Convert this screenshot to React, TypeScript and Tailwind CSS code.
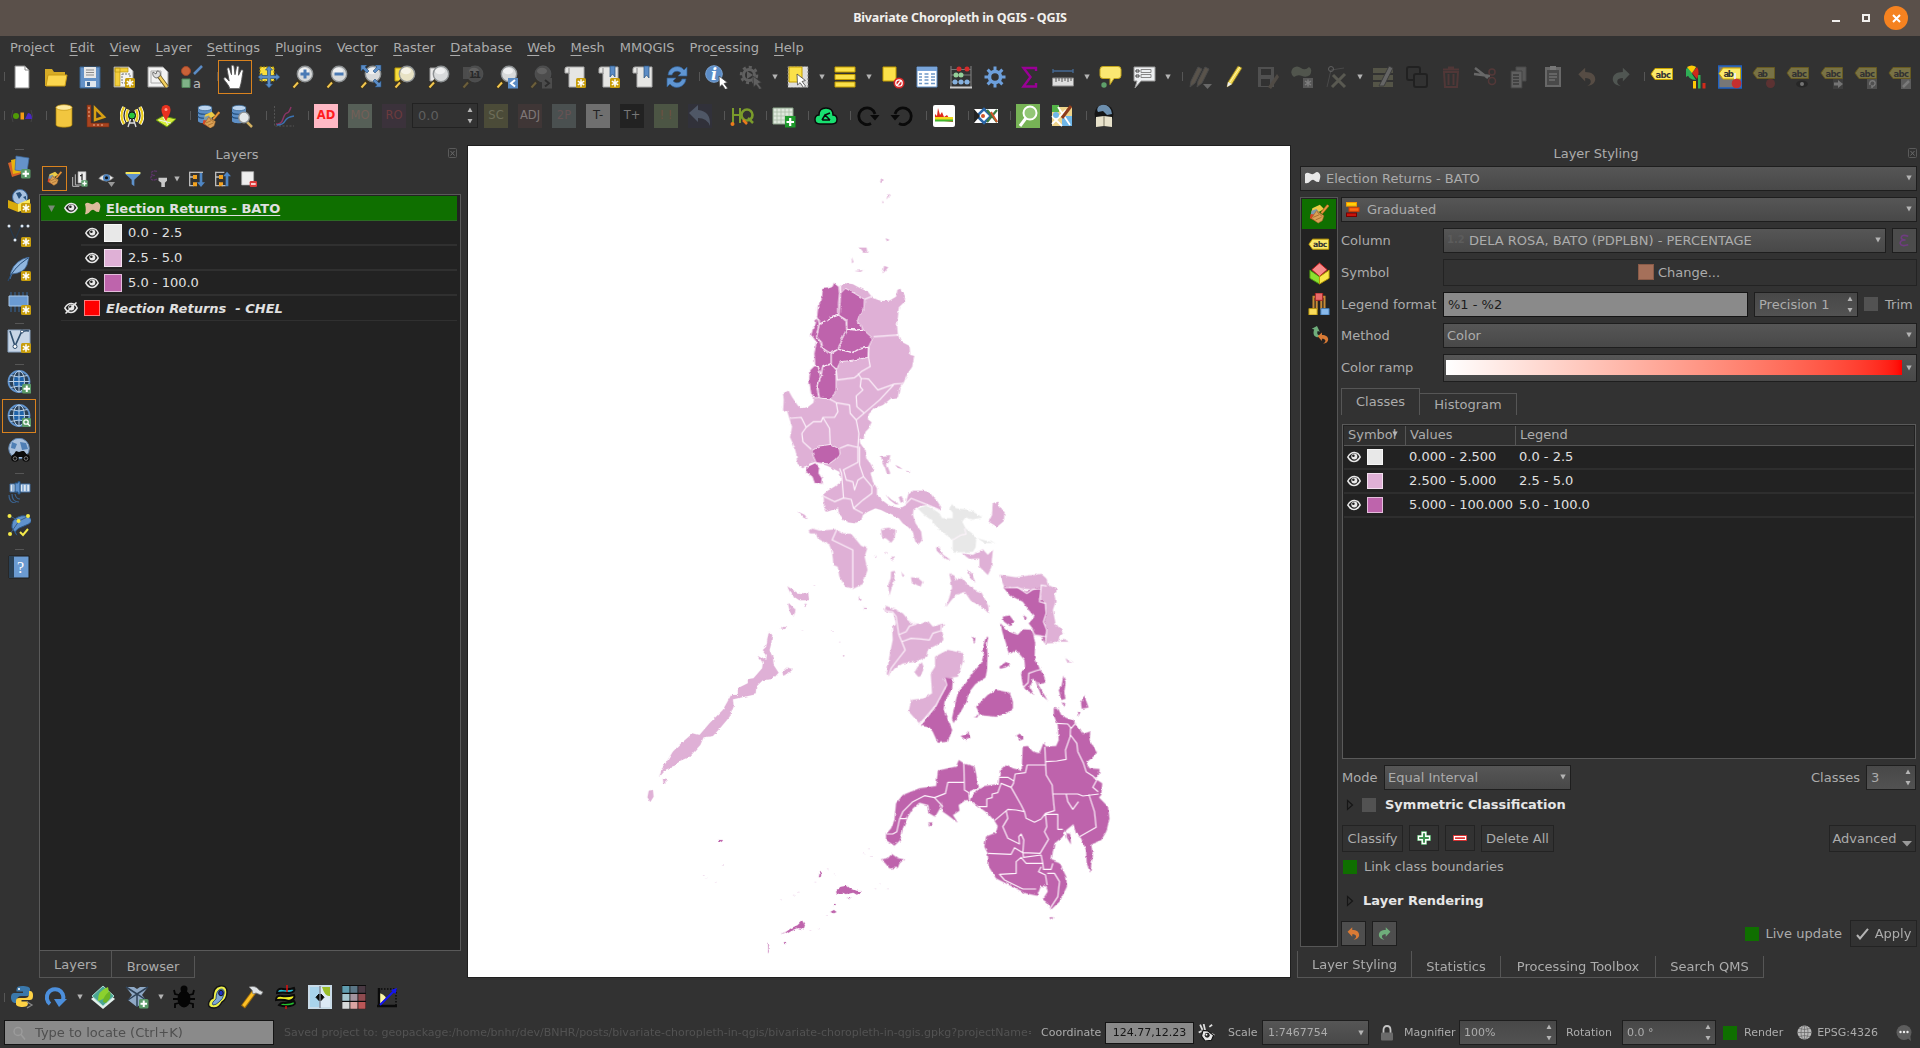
import React from 'react';

type Kids = { children?: React.ReactNode };

/* ---------- icon primitives ---------- */

function Ico({ children, s = 24, o = 1 }: Kids & { s?: number; o?: number }) {
  return (
    <svg width={s} height={s} viewBox="0 0 24 24" opacity={o} fill="none" className="shrink-0">
      {children}
    </svg>
  );
}

const Star = ({ x = 14, y = 14 }: { x?: number; y?: number }) => (
  <g transform={`translate(${x} ${y})`}>
    <rect width="10" height="10" rx="1.5" fill="#c79d0c" />
    <path d="M5 1.3v7.4M1.8 3.2l6.4 3.6M8.2 3.2L1.8 6.8" stroke="#fff" strokeWidth="1.5" />
  </g>
);

const PlusBadge = ({ x = 14, y = 14 }: { x?: number; y?: number }) => (
  <g transform={`translate(${x} ${y})`}>
    <rect width="9.5" height="9.5" rx="1.5" fill="#5a9a68" />
    <path d="M4.75 1.5v6.5M1.5 4.75h6.5" stroke="#fff" strokeWidth="2" />
  </g>
);

const Lens = ({ children, fill = '#d8dadb' }: Kids & { fill?: string }) => (
  <>
    <path d="M9.500 14.500L2 23" stroke="#3b321e" strokeWidth="4" />
    <path d="M7 17.500L2.500 22.500" stroke="#f3c74d" strokeWidth="2" />
    <circle cx="14" cy="9" r="7.700" fill={fill} stroke="#8d9193" strokeWidth="1.400" />
    <ellipse cx="13" cy="6" rx="5" ry="3.200" fill="#fff" opacity=".6" />
    {children}
  </>
);

const Scroll = ({ children }: Kids) => (
  <>
    <path d="M4 2h17v20H6V8H2V4q0-2 2-2z" fill="#e6e6e4" stroke="#aaa" />
    <path d="M6 3v6" stroke="#8a8a8a" />
    {children}
  </>
);

const Cursor = ({ x = 12, y = 11, fill = '#fff' }: { x?: number; y?: number; fill?: string }) => (
  <path transform={`translate(${x} ${y})`} d="M0 0l.5 11 2.600-2.300 3.500 5 2-1.500-3.500-4.700 3.300-1z" fill={fill} stroke="#444" strokeWidth=".8" />
);

const Tag = ({ y = 0, t = 'abc' }: { y?: number; t?: string }) => (
  <g transform={`translate(0 ${y})`}>
    <path d="M1 8l4-5.500h17.500v11H5z" fill="#fbe96a" stroke="#c9a400" />
    <text x="5.500" y="11.500" fontSize="8.500" fontWeight="bold" fill="#333" fontFamily="DejaVu Sans" textLength={t.length * 5.2}>{t}</text>
  </g>
);

const Globe = ({ children }: Kids) => (
  <>
    <circle cx="12" cy="11.500" r="10.500" fill="#2a3f55" stroke="#5f92cc" strokeWidth="1.800" />
    <circle cx="12" cy="11.500" r="6" fill="#1f62a8" />
    <path d="M1.500 11.500h21M12 1v21M3.500 5.500q8.500 3 17 0M3.500 17.500q8.500-3 17 0" stroke="#b9cfe6" strokeWidth="1" />
    <ellipse cx="12" cy="11.500" rx="5.500" ry="10.500" stroke="#b9cfe6" strokeWidth="1" />
    {children}
  </>
);

const Brush = () => (
  <>
    <path d="M4 5l9-4 5 5-9 5-6-1z" fill="#eccb46" />
    <path d="M3 8l6-2 4 5-6 4-5-2z" fill="#7f9aa8" />
    <path d="M2 12l6 1 2 9-9-5z" fill="#dd4326" />
    <path d="M9 8l9 6-2 6-5 3-8-6z" fill="#dba055" stroke="#8f5a1e" strokeWidth=".6" />
    <path d="M5 16l7-3M8 19l7-3M10 10l6 5" stroke="#9a6224" strokeWidth=".9" />
    <path d="M15 11L23 1.500" stroke="#a3611c" strokeWidth="3.400" />
    <path d="M15 11L23 1.500" stroke="#ea9a40" strokeWidth="2" />
  </>
);

const Db = () => (
  <>
    <path d="M2 4v13c0 3 14 3 14 0V4z" fill="#5d8fc6" />
    <ellipse cx="9" cy="4" rx="7" ry="2.700" fill="#bcd4ee" stroke="#31628f" strokeWidth=".7" />
    <path d="M2 8c0 3 14 3 14 0M2 12c0 3 14 3 14 0" stroke="#24507d" strokeWidth="1.200" />
  </>
);

const EyeIcon = ({ off = false }: { off?: boolean }) => (
  <svg width="14" height="12" viewBox="0 0 14 12" fill="none" className="shrink-0">
    <path d="M.8 6Q3.500 1.300 7.500 1.500T13.200 6Q10.500 10.500 7 10.500T.8 6z" fill={off ? 'none' : '#222'} stroke="#e8e8e8" strokeWidth="1.500" />
    <circle cx="7.300" cy="5.500" r="3" fill="#e8e8e8" />
    <circle cx="6.400" cy="4.800" r="1.300" fill="#222" />
    {off && <path d="M1.500 11.500L12.500.5" stroke="#e8e8e8" strokeWidth="1.500" />}
  </svg>
);

const Undo = ({ c = '#d97a35', flip = false }: { c?: string; flip?: boolean }) => (
  <g transform={flip ? 'translate(24 0) scale(-1 1)' : undefined}>
    <path d="M2.500 9L10 2v4.500c7 0 11 3 11 8 0 4-4 7-9 7.500 3.500-2 4.500-4 4-6s-2.500-3-6-3v4z" fill={c} />
  </g>
);

const Caret = ({ className = 'w-[13px]' }: { className?: string }) => (
  <span className={`${className} flex justify-center shrink-0`}>
    <svg width="6" height="6" viewBox="0 0 6 6"><path d="M.3.5h5.400L3 5.500z" fill="#b4b4b4" /></svg>
  </span>
);

const Btn = ({ children, on = false }: Kids & { on?: boolean }) => (
  <span className={`w-[34px] h-[34px] shrink-0 flex items-center justify-center border ${on ? 'border-[#d9821e]' : 'border-transparent'}`}>{children}</span>
);

const Sep = ({ w = 'w-2' }: { w?: string }) => (
  <span className={`${w} h-[9px] shrink-0 border-r border-[#565656]`} />
);
const HSep = ({ h = 'h-[7px]' }: { h?: string }) => (
  <span className={`${h} w-[9px] shrink-0 border-b border-[#565656]`} />
);

const Mini = ({ bg, fg, t }: { bg: string; fg: string; t: string }) => (
  <span className={`w-6 h-6 flex items-center justify-center text-[11.500px] leading-none ${bg} ${fg}`}>{t}</span>
);

/* ---------- toolbars ---------- */

function MainToolbar() {
  return (
    <div className="flex h-[39px] items-center">
      <Sep w="w-[5px]" />
      <Btn><Ico><path d="M5 1h10l4 4v18H5z" fill="#fff" stroke="#888" /><path d="M15 1v4h4" stroke="#888" /></Ico></Btn>
      <Btn><Ico><path d="M1 4h7l2 3h11v14H1z" fill="#d6ab26" /><path d="M4 10h19l-2 11H2z" fill="#fbd64f" stroke="#c99a15" /></Ico></Btn>
      <Btn><Ico><path d="M2 2h20v21H2z" fill="#6391c7" stroke="#39628f" /><path d="M6 2h12v11H6z" fill="#e8e8e8" /><path d="M8 5h8M8 7.500h8M8 10h8" stroke="#8a8a8a" /><path d="M7 16h11v6H7z" fill="#dfe6ee" /><path d="M9 17h3v4H9z" fill="#365e8b" /></Ico></Btn>
      <Btn><Ico><path d="M2 2h15l4 4v16H2z" fill="#f3f3f3" stroke="#999" /><path d="M3 3h5v18H3zM3 3h13v4H3z" fill="#f4cf3c" stroke="#b8950f" strokeWidth=".7" /><path d="M10 9h8v9h-8z" stroke="#777" strokeDasharray="2 1" /><Star x={13} y={13} /></Ico></Btn>
      <Btn><Ico><path d="M2 2h15l5 5v15H2z" fill="#f3f3f3" stroke="#999" /><path d="M5 6h10v12H5z" stroke="#aaa" /><path d="M12 10l9 12" stroke="#66531d" strokeWidth="4" /><path d="M13 11l8 11" stroke="#f3cf5e" strokeWidth="2.400" /><path d="M7 7l3 2 1-3c3 0 4 2 3 5l-3 2c-3 0-5-3-4-6z" fill="#ddd" stroke="#555" strokeWidth=".8" /></Ico></Btn>
      <Btn><Ico><circle cx="6" cy="6" r="4.500" fill="#c96238" stroke="#a3482a" /><path d="M14 9l8-8" stroke="#5b8cc6" strokeWidth="2.500" /><path d="M2 14h8v8.500H2z" fill="#7fb287" stroke="#52875b" /><text x="13" y="22.500" fontSize="13" fill="#bbb" fontFamily="DejaVu Sans">a</text></Ico></Btn>
      <Sep w="w-[9px]" />
      <Btn on><Ico s={28}><path d="M7.500 22c-.5-3-4-6-5-8-.6-1.500 1.300-2 2.300-.8L7 15.500 5.200 5.500c-.2-1.600 1.800-2 2.200-.4L9 10 8.800 3.200c0-1.700 2.200-1.700 2.400 0L12 10l1.300-6.500c.4-1.500 2.300-1.200 2.100.4L15 10.500l2-4c.7-1.300 2.300-.6 1.900.8-.9 4-1 9-3 14.700z" fill="#fff" stroke="#555" strokeWidth=".8" /></Ico></Btn>
      <Btn><Ico><path d="M3 2h14v14H3z" fill="#f9dd3e" stroke="#a88b00" strokeDasharray="2 1" /><path d="M12 1l3.500 4h-2v5.500H19v-2l4 3.500-4 3.500v-2h-5.500V19h2L12 23l-3.500-4h2v-5.500H5v2L1 12l4-3.500v2h5.500V5h-2z" fill="#5b8cc6" stroke="#29527d" strokeWidth=".7" /></Ico></Btn>
      <Btn><Ico><Lens><path d="M14 4.500v9M9.500 9h9" stroke="#4a7ab5" strokeWidth="3" /></Lens></Ico></Btn>
      <Btn><Ico><Lens><path d="M9.500 9h9" stroke="#4a7ab5" strokeWidth="3" /></Lens></Ico></Btn>
      <Btn><Ico><Lens /><path d="M2 0h6L6 2l4 4-2 2-4-4-2 2zM22 0h-6l2 2-4 4 2 2 4-4 2 2zM22 22h-6l2-2-4-4 2-2 4 4 2-2z" fill="#5b8cc6" stroke="#29527d" strokeWidth=".6" /></Ico></Btn>
      <Btn><Ico><path d="M2 3h10v13H2z" fill="#f7dc3c" stroke="#b99a05" /><Lens fill="#e8e2c4" /></Ico></Btn>
      <Btn><Ico><path d="M3 3h10v13H3z" fill="#e9e9e9" stroke="#999" /><Lens /></Ico></Btn>
      <Btn><Ico o={0.3}><path d="M2 2h10v12H2z" fill="#888" /><Lens fill="#888"><text x="8" y="12.500" fontSize="9" fontWeight="bold" fill="#111" textLength="12">1:1</text></Lens></Ico></Btn>
      <Btn><Ico><Lens /><path d="M13 13h10v10.500H13z" fill="#5b8cc6" /><path d="M20 15l-4 3.300 4 3.300" stroke="#fff" strokeWidth="2" /></Ico></Btn>
      <Btn><Ico o={0.3}><Lens fill="#888" /><path d="M13 13h10v10.500H13z" fill="#888" /><path d="M16 15l4 3.300-4 3.300" stroke="#222" strokeWidth="2" /></Ico></Btn>
      <Btn><Ico><Scroll /><Star x={13} y={13} /></Ico></Btn>
      <Btn><Ico><Scroll><path d="M13 1h5v11l-2.500-3-2.500 3z" fill="#5b8cc6" stroke="#29527d" strokeWidth=".7" /></Scroll><Star x={13} y={13} /></Ico></Btn>
      <Btn><Ico><Scroll><path d="M13 1h5v12l-2.500-3-2.500 3z" fill="#5b8cc6" stroke="#29527d" strokeWidth=".7" /></Scroll></Ico></Btn>
      <Btn><Ico><path d="M3 10c1-9 12-11 16-5l3-3v9h-9l3-3c-3-3-8-2-9 2zM21 14c-1 9-12 11-16 5l-3 3v-9h9l-3 3c3 3 8 2 9-2z" fill="#5f95d2" stroke="#315f93" strokeWidth=".7" /></Ico></Btn>
      <Sep w="w-[6px]" />
      <Btn><Ico><circle cx="9" cy="9" r="8.300" fill="#5b8cc6" stroke="#7ba4d4" /><text x="6" y="15" fontSize="16" fontStyle="italic" fontWeight="bold" fill="#fff" fontFamily="DejaVu Serif">i</text><Cursor x={14} /></Ico></Btn>
      <Btn><Ico o={0.45}><circle cx="10" cy="10" r="5.500" stroke="#999" strokeWidth="3" /><circle cx="10" cy="10" r="8" stroke="#999" strokeWidth="2.500" strokeDasharray="3.100 3.100" /><path d="M8 6l6 4-6 4z" fill="#999" /><Cursor x={14} y={11} fill="#999" /></Ico></Btn>
      <Caret />
      <Btn><Ico><path d="M2 1.500h20v21H2z" fill="#ddd" stroke="#777" strokeDasharray="2 1.500" /><path d="M3 2h13v15H3z" fill="#fbe14a" stroke="#c39d00" /><Cursor x={11} y={9} /></Ico></Btn>
      <Caret />
      <Btn><Ico><path d="M2 2h20v5H2zM2 9.500h20v5H2zM2 17h20v5H2z" fill="#fbe14a" stroke="#c39d00" /></Ico></Btn>
      <Caret className="w-[14px]" />
      <Btn><Ico><path d="M2 2h13v14H2z" fill="#fbe14a" stroke="#c39d00" /><circle cx="18" cy="18" r="5.500" fill="#d92828" /><circle cx="18" cy="18" r="3.200" stroke="#fff" strokeWidth="1.300" /><path d="M20 15.500l-4 5" stroke="#fff" strokeWidth="1.300" /></Ico></Btn>
      <Btn><Ico><path d="M2 2h20v20H2z" fill="#fff" stroke="#5b8cc6" /><path d="M2 2h20v4H2z" fill="#79a5da" /><path d="M4 9h3M9.500 9h4M16 9h4M4 12h3M9.500 12h4M16 12h4M4 15h3M9.500 15h4M16 15h4M4 18.500h3M9.500 18.500h4M16 18.500h4" stroke="#6e97c6" strokeWidth="1.500" /></Ico></Btn>
      <Btn><Ico><path d="M2 1v21M22 1v21M2 4.500h20M2 10h20M2 17h20" stroke="#777" strokeWidth="1.200" /><path d="M1 22.500h22" stroke="#ccc" strokeWidth="2" /><g><circle cx="10" cy="4" r="2.500" fill="#d52b2b" /><circle cx="18" cy="4" r="2.500" fill="#d52b2b" /><circle cx="7" cy="10" r="2.500" fill="#95cf9a" /><circle cx="12" cy="10" r="2.500" fill="#95cf9a" /><circle cx="6" cy="17" r="2.500" fill="#86b1df" /><circle cx="12" cy="17" r="2.500" fill="#86b1df" /><circle cx="18" cy="17" r="2.500" fill="#86b1df" /></g></Ico></Btn>
      <Btn><Ico><circle cx="12" cy="12" r="5.500" stroke="#6d9fdb" strokeWidth="3.500" /><path d="M12 1.500v5M12 17.500v5M1.500 12h5M17.500 12h5M4.600 4.600l3.500 3.500M15.900 15.900l3.500 3.500M19.400 4.600l-3.500 3.500M8.100 15.900l-3.500 3.500" stroke="#6d9fdb" strokeWidth="3" /></Ico></Btn>
      <Btn><Ico><path d="M19 6V3H6.500l7 9-7 9.500H19v-3.500" stroke="#9a0096" strokeWidth="2.400" /></Ico></Btn>
      <Btn><Ico><path d="M2 6h20M2 4v4M22 4v4" stroke="#466a94" strokeWidth="1.300" /><path d="M1.500 13h21v8h-21z" fill="#ddd" stroke="#888" /><path d="M5 13v4M8 13v3M11 13v4M14 13v3M17 13v4M20 13v3" stroke="#555" /></Ico></Btn>
      <Caret />
      <Btn><Ico><path d="M5 1.500h15q3 0 3 3v6q0 3-3 3h-4l-4 6v-6H5q-3 0-3-3v-6q0-3 3-3z" fill="#fbe872" stroke="#c3a51c" /><circle cx="6" cy="20" r="2.700" fill="#5ea06a" /></Ico></Btn>
      <Btn><Ico><path d="M2 2h21v14H9l-6 7 2-7H2z" fill="#eef0f2" stroke="#999" /><path d="M4 5h3v2H4zM4 10h3v2H4z" stroke="#444" /><path d="M9 4.500h10v3H9zM9 9.500h10v3H9z" stroke="#888" /></Ico></Btn>
      <Caret />
      <Sep w="w-[9px]" />
      <Btn><Ico o={0.45}><path d="M2 22l1-6L10 2l4 2-7 14zM9 22l1-6L17 2l4 2-7 14z" fill="#8a7b6a" stroke="#666" /><path d="M15 19h9l-4.500 5z" fill="#aaa" /></Ico></Btn>
      <Btn><Ico><path d="M5 22l1-5L16 1l4 2-10 16z" fill="#f3d94e" stroke="#7d6c1e" strokeWidth=".8" /><path d="M8 17L18 2" stroke="#fff6b0" /><path d="M5 22l1-5 4 2z" fill="#eee" /></Ico></Btn>
      <Btn><Ico o={0.35}><path d="M2 2h16v20H2z" fill="#888" /><path d="M5 4h10v6H5zM5 14h9v7H5z" fill="#333" /><path d="M12 22l9-13 2 3-8 12z" fill="#8a7b6a" /></Ico></Btn>
      <Btn><Ico o={0.45}><path d="M3 3q4-3 8 0t8-1q4 2 1 8-4 3-8 1t-8 1q-5-4-1-9z" fill="#77806f" /><path d="M13 13h10v10H13z" fill="#888" /><path d="M18 14.500v7M15 16l6 4M21 16l-6 4" stroke="#ddd" strokeWidth="1.300" /></Ico></Btn>
      <Btn><Ico o={0.45}><path d="M3 22L7 5l13-2" stroke="#666" /><circle cx="7" cy="4" r="2.500" stroke="#999" /><path d="M9 10l12 12M21 9L8 22" stroke="#8a8a78" strokeWidth="3" /></Ico></Btn>
      <Caret />
      <Btn><Ico o={0.5}><path d="M2 3h20v5H2zM2 10h20v5H2zM2 17h20v5H2z" fill="#77775c" /><path d="M8 21L18 1l4 2-9 18z" fill="#999" stroke="#444" /></Ico></Btn>
      <Btn><Ico o={0.8}><rect x="2" y="2" width="13" height="13" rx="2" stroke="#1e1e1e" strokeWidth="2" /><rect x="9" y="9" width="13" height="13" rx="2" fill="#323232" stroke="#1e1e1e" strokeWidth="2" /></Ico></Btn>
      <Btn><Ico o={0.4}><path d="M5 7h14l-1 15H6z" stroke="#7d4040" strokeWidth="2" /><path d="M4 4.500h16M9 2.500h6M9.500 9v11M14.500 9v11" stroke="#7d4040" strokeWidth="2" /></Ico></Btn>
      <Btn><Ico o={0.45}><path d="M2 3l13 10M1 9l16 2" stroke="#aaa" strokeWidth="2.500" /><circle cx="19" cy="7" r="3" stroke="#7d4040" strokeWidth="1.500" /><circle cx="19" cy="16" r="3.500" stroke="#7d4040" strokeWidth="1.500" /></Ico></Btn>
      <Btn><Ico o={0.45}><path d="M9 2h10v14H9z" fill="#888" stroke="#666" /><path d="M4 6h11v17H4z" fill="#999" stroke="#555" /><path d="M6 10h6M6 13h6M6 16h6M6 19h6" stroke="#444" strokeWidth="1.400" /></Ico></Btn>
      <Btn><Ico o={0.45}><path d="M4 2h16v20H4z" fill="#aaa" /><path d="M6 5h12v15H6z" fill="#666" /><path d="M9 1h6v4H9z" fill="#ccc" /><path d="M8 9h8M8 12h8M8 15h6" stroke="#bbb" strokeWidth="1.400" /></Ico></Btn>
      <Btn><Ico s={22} o={0.5}><Undo c="#7a6656" /></Ico></Btn>
      <Btn><Ico s={22} o={0.5}><Undo c="#6f7a72" flip /></Ico></Btn>
      <Sep w="w-[7px]" />
      <Btn><Ico><Tag y={1} /></Ico></Btn>
      <Btn><Ico><path d="M2 4q5-5 10-2L9 8 2 12z" fill="#2fae56" /><path d="M3 2q5-3 9 0l-4 6z" fill="#ffc905" /><path d="M8 8l5-6q3 5 0 12z" fill="#d12a1a" /><path d="M2 6l6 3 4 6q-8 0-10-9z" fill="#2fae56" /><path d="M9 16h3v7.500H9z" fill="#ffc905" /><path d="M14 10h2.500v13.500H14z" fill="#2fae56" /><path d="M18.500 18h3v5.500h-3z" fill="#d12a1a" /></Ico></Btn>
      <Btn><Ico><path d="M.5 1h23v22H.5z" fill="#777" stroke="#1f62c4" strokeWidth="1.600" /><Tag y={.5} t="ab" /><path d="M17 8v8" stroke="#eee" strokeWidth="2" /><circle cx="18.500" cy="18.500" r="4.800" fill="#c42f2f" /></Ico></Btn>
      <Btn><Ico o={0.35}><Tag t="ab" /><circle cx="18.500" cy="18.500" r="4.500" fill="#a33" /></Ico></Btn>
      <Btn><Ico o={0.35}><Tag /><ellipse cx="16" cy="19" rx="6" ry="3.500" fill="#111" /><circle cx="16" cy="19" r="2" fill="#eee" /></Ico></Btn>
      <Btn><Ico o={0.35}><Tag /><path d="M13 14h10v10H13z" fill="#555" /><path d="M14 17.500h4V15l5 4-5 4v-2.500h-4z" fill="#eee" /></Ico></Btn>
      <Btn><Ico o={0.35}><Tag /><path d="M13 14h10v10H13z" fill="#888" /><path d="M16 20c-2-5 6-6 5-1-1 3-3 2-3 2v2" stroke="#fff" strokeWidth="1.500" /></Ico></Btn>
      <Btn><Ico o={0.35}><Tag /><path d="M13 14h10v10H13z" fill="#aaa" /><path d="M15 22l6-6" stroke="#fff" strokeWidth="2.500" /></Ico></Btn>
    </div>
  );
}

function PluginToolbar() {
  return (
    <div className="flex h-[39px] items-center">
      <Sep w="w-[5px]" />
      <Btn><Ico><path d="M3 6q-3 6 0 12M21 6q3 6 0 12" stroke="#444" /><circle cx="6" cy="12" r="3" fill="#4f9a06" /><path d="M10.500 8.500h3.500v7h-3.500z" fill="#f39b13" /><path d="M15 15l3-6q4 0 4 6z" fill="#4a28c4" /></Ico></Btn>
      <Sep />
      <Btn><Ico><path d="M4 3v18c0 3 16 3 16 0V3z" fill="#f2c63f" stroke="#a57b06" strokeWidth=".7" /><ellipse cx="12" cy="3.500" rx="8" ry="2.800" fill="#fdeaa0" stroke="#c3930e" strokeWidth=".7" /></Ico></Btn>
      <Btn><Ico><path d="M1 1h4v18h18v4H1z" fill="#a8441f" stroke="#6e2a10" strokeWidth=".6" /><path d="M2 4h2M2 8h2M2 12h2M8 20v2M12 20v2M16 20v2" stroke="#f0b090" /><path d="M9 4v12l9-3z" stroke="#d8a013" strokeWidth="2.500" /></Ico></Btn>
      <Btn><Ico><path d="M4 3q-5 9 0 17M8 5.500q-3 6.500 0 12M20 3q5 9 0 17M16 5.500q3 6.500 0 12" stroke="#fff" strokeWidth="3.600" /><path d="M4 3q-5 9 0 17M8 5.500q-3 6.500 0 12M20 3q5 9 0 17M16 5.500q3 6.500 0 12" stroke="#eacb14" strokeWidth="2.200" /><path d="M12 11L8 23M12 11l4 12M9 19h6" stroke="#ddd" strokeWidth="1.300" /><circle cx="12" cy="11.500" r="3.500" fill="#28c43c" stroke="#111" /></Ico></Btn>
      <Btn><Ico><path d="M2 16l7-4 13 3-9 8z" fill="#d6ee3a" stroke="#5e8b10" /><path d="M5 16l12 3M9 13l5 8" stroke="#eee" /><path d="M12 17C8 10 7.500 8 7.500 5.500a4.500 4.500 0 019 0C16.500 8 16 10 12 17z" fill="#e8321f" /><circle cx="12" cy="5.500" r="1.500" fill="#ff9c8c" /></Ico></Btn>
      <Sep />
      <Btn><Ico><Db /><g transform="translate(6 7) scale(.75)"><Brush /></g></Ico></Btn>
      <Btn><Ico><Db /><path d="M17 18l5 5" stroke="#d3b162" strokeWidth="2.500" /><circle cx="14" cy="13.500" r="5.300" fill="#e4e8ea" stroke="#8d9193" strokeWidth="1.300" /></Ico></Btn>
      <Sep />
      <Btn><Ico><path d="M2.500 2v20H22" stroke="#555" strokeDasharray="2 1.500" /><path d="M4 20q5 1 7-5t4-6 4-6" stroke="#8a3566" strokeWidth="1.500" /><path d="M5 21q6 0 8-4t9-5" stroke="#3b72b0" strokeWidth="1.500" /></Ico></Btn>
      <Sep />
      <Btn><span className="font-bold"><Mini bg="bg-[#ffb9c5]" fg="text-[#ff1d1d]" t="AD" /></span></Btn>
      <Btn><Mini bg="bg-[#565f57]" fg="text-[#736058]" t="MO" /></Btn>
      <Btn><Mini bg="bg-[#3b323b]" fg="text-[#6c3b3e]" t="RO" /></Btn>
      <span className="mx-px h-[25px] w-[66px] border border-[#222] flex items-center justify-between pl-[5px] pr-1 text-[#5f5f5f] text-[13px]">0.0<Spin /></span>
      <Btn><Mini bg="bg-[#4b4b38]" fg="text-[#6e6e5a]" t="SC" /></Btn>
      <Btn><Mini bg="bg-[#3f3636]" fg="text-[#807878]" t="ADJ" /></Btn>
      <Btn><Mini bg="bg-[#4a5050]" fg="text-[#665354]" t="2P" /></Btn>
      <Btn><Mini bg="bg-[#6f6f6f]" fg="text-[#222]" t="T-" /></Btn>
      <Btn><Mini bg="bg-[#222]" fg="text-[#777]" t="T+" /></Btn>
      <Btn><Mini bg="bg-[#4c5544]" fg="text-[#6e5040]" t="! !" /></Btn>
      <Btn><Ico><path d="M0 0h24v24H0z" fill="#31313a" /><path d="M1 9l9-8v5q13 1 12 16-3-8-12-8v4z" fill="#4f5766" /></Ico></Btn>
      <Sep />
      <Btn><Ico><path d="M3 4v15M3 11h7M10 4v15" stroke="#7a9b2b" strokeWidth="2" /><circle cx="17" cy="11" r="5.500" stroke="#7a9b2b" strokeWidth="2.600" /><path d="M18 14l5 5" stroke="#7a9b2b" strokeWidth="2.500" /><circle cx="2.500" cy="20" r="2" fill="#ec7a1c" /><path d="M13 16l4 4" stroke="#ec7a1c" strokeWidth="2.500" /></Ico></Btn>
      <Sep />
      <Btn><Ico><path d="M1 4h20v16H1z" fill="#dfe8dd" stroke="#8aa389" /><path d="M1 8h20M1 12h20M1 16h20M5 4v16M9 4v16M13 4v16M17 4v16" stroke="#a9bda7" strokeWidth=".8" /><path d="M13 12h10.500v11.500H13z" fill="#1d9a2b" /><path d="M18.200 14v8M14.500 18h7.500" stroke="#fff" strokeWidth="2.200" /></Ico></Btn>
      <Sep />
      <Btn><Ico><path d="M6 20q-5 0-5-4.500T5 11q0-7 7-7t7 7q4 0 4 4.500T18 20z" fill="#18e070" stroke="#0a0a0a" strokeWidth="1.400" /><path d="M8 16l3-5 5 5M11 11l5-2M8 16h8" stroke="#0a0a0a" strokeWidth="1.500" /></Ico></Btn>
      <Sep />
      <Btn><Ico><path d="M15 19.500A8.300 8.300 0 1119 10" stroke="#0a0a0a" strokeWidth="2.800" /><path d="M14 11h9.500L19 16.500z" fill="#0a0a0a" /></Ico></Btn>
      <Btn><Ico><path d="M9 19.500A8.300 8.300 0 105 10" stroke="#0a0a0a" strokeWidth="2.800" /><path d="M10 11H.5L5 16.500z" fill="#0a0a0a" /></Ico></Btn>
      <Sep />
      <Btn><Ico><rect x="1" y="1" width="22" height="22" rx="2" fill="#fff" /><path d="M3 16V10l2 2 1-8 2 7 2-3 2 5 3-2 2 3 4 1v3z" fill="#e02a1c" /><path d="M3 13h18v3H3z" fill="#f0d91c" /><path d="M3 15.500h18v2H3z" fill="#41b52c" /></Ico></Btn>
      <Sep />
      <Btn><Ico><path d="M0 5h24v14H0z" fill="#fff" /><path d="M3 12l7-7 7 7-7 7z" stroke="#2b67a8" strokeWidth="2.500" /><path d="M13 6l10 12M13 18L23 6" stroke="#3b7a3f" strokeWidth="2.200" /><path d="M17 8l6 10" stroke="#d0552a" strokeWidth="2" /><path d="M0 5l6 7-6 7z" fill="#222" /><circle cx="9" cy="12" r="2" fill="#d0552a" /></Ico></Btn>
      <Sep />
      <Btn><Ico><path d="M0 0h24v24H0z" fill="#77b356" /><circle cx="14" cy="9" r="6.500" fill="#93c777" stroke="#fff" strokeWidth="2" /><path d="M10 14l-6 8" stroke="#fff" strokeWidth="3" /></Ico></Btn>
      <Btn><Ico><path d="M2 3h20v19H2z" fill="#efd58b" /><path d="M2 1h7v7H2z" fill="#54b348" /><path d="M12 12h10v10H12z" fill="#6fb7e9" /><path d="M2 12l10 10M2 20L16 6M8 3l12 18" stroke="#fff" strokeWidth="1.800" /><path d="M12 14l9-12" stroke="#8d3b1c" strokeWidth="3" /><circle cx="6" cy="11" r="3" fill="#6fb7e9" /></Ico></Btn>
      <Sep />
      <Btn><Ico><circle cx="12" cy="10" r="9.500" fill="#151515" /><path d="M7 2q6-3 10 1 3 3 3 7l-5 1-4-4-5 1q-2-3 1-6z" fill="#6d8fae" /><path d="M4 13l8-1 8 1v10l-8-1-8 1z" fill="#e8e2cb" /><path d="M12 12v10" stroke="#7d7964" /></Ico></Btn>
    </div>
  );
}

function SideToolbar() {
  return (
    <div className="w-[38px] shrink-0 flex flex-col items-center pt-[4px]">
      <HSep h="h-px" />
      <Btn><Ico><path d="M1 8l9-3 4 14-9 3z" fill="#d5632b" /><path d="M4 5l9-2 2 14-9 2z" fill="#e8b40d" /><path d="M9 1l13 2-2 14-12-2z" fill="#6593c9" stroke="#3f6a9c" strokeWidth=".7" /><PlusBadge /></Ico></Btn>
      <Btn><Ico><circle cx="13" cy="8" r="7.500" fill="#a7c2e0" stroke="#3f6a9c" /><path d="M9 4l4-1 2 3-3 4zM16 8l3-1v4z" fill="#274f79" /><path d="M1 11l10 4v8L1 19z" fill="#d9ab0c" /><path d="M11 15l12-5v9l-12 4z" fill="#fbe85c" /><Star /></Ico></Btn>
      <Btn><Ico><path d="M2 3l6 14 6-14h7" stroke="#26394d" strokeWidth="1.200" /><circle cx="2" cy="3" r="1.500" fill="#dfe9f4" /><circle cx="8" cy="17" r="1.500" fill="#dfe9f4" /><circle cx="15" cy="3" r="1.500" fill="#dfe9f4" /><circle cx="21" cy="3" r="1.500" fill="#dfe9f4" /><Star /></Ico></Btn>
      <Btn><Ico><path d="M22 0Q8 3 4 15l-1 7 2-5q12-1 15-9z" fill="#90b6df" stroke="#3f6a9c" strokeWidth=".8" /><path d="M1 24Q5 12 21 1" stroke="#264d78" /><Star /></Ico></Btn>
      <Btn><Ico><path d="M4 1v20M8 1v20M12 1v20M16 1v20M20 1v15" stroke="#35557a" strokeWidth="1.500" /><path d="M2 5h19v10H2z" fill="#6b9bd2" stroke="#a8c6e6" /><Star /></Ico></Btn>
      <HSep h="h-[4px]" />
      <Btn><Ico><path d="M1 1h22v22H1z" fill="#c8d6e6" stroke="#8aa3c0" /><path d="M3 2l5 15 6-13q2-3 8-2" stroke="#31506f" strokeWidth="1.600" /><circle cx="8" cy="17.500" r="2" fill="#fff" stroke="#31506f" /><circle cx="15" cy="2.500" r="1.500" fill="#fff" stroke="#31506f" /><Star /></Ico></Btn>
      <HSep />
      <Btn><Ico><Globe><PlusBadge x={15} y={14} /></Globe></Ico></Btn>
      <Btn on><Ico><Globe><rect x="15" y="14" width="9" height="9" rx="1" fill="#5a9a68" /><circle cx="19" cy="18" r="2.200" stroke="#fff" strokeWidth="1.300" /><path d="M20.500 19.500l2.500 2.500" stroke="#fff" strokeWidth="1.300" /></Globe></Ico></Btn>
      <Btn><Ico><circle cx="12" cy="10.500" r="10.300" fill="#a9c0dc" stroke="#5f84ae" /><path d="M5 4l5 2-2 5-4-1zM13 4l6 1 2 6-6 1z" fill="#4f7fb5" /><path d="M5 19l4-6 3 1 3-1h2l5 6z" fill="#0c0c0c" /><circle cx="8" cy="20" r="3.800" fill="#0c0c0c" /><circle cx="19" cy="20" r="3.800" fill="#0c0c0c" /><circle cx="8" cy="20.500" r="1.800" stroke="#777" /><circle cx="19" cy="20.500" r="1.800" stroke="#777" /></Ico></Btn>
      <HSep />
      <Btn><Ico><path d="M3 5h7v8H3zM13 5h10v8H13z" fill="#dfe8f1" stroke="#3f6a9c" /><path d="M6 5v8M16 5v8M19.500 5v8" stroke="#7ba3cf" strokeWidth="1.500" /><path d="M8 4h3v-1.500h2V15h-2v-2H8z" fill="#5f92cc" stroke="#24507d" /><path d="M8 15q1 5 5 5M5 15q0 8 7 8M2 16q0 8 7 8" stroke="#3b638f" strokeWidth="1.200" /></Ico></Btn>
      <Btn><Ico><path d="M5 15q-1-8 6-11t12 1-6 8-8 8-4-6z" fill="#5f92cc" stroke="#2b5788" /><path d="M3 3l9 5 10-5M12 8L3 21" stroke="#3d5f85" /><g fill="#f4e94a"><circle cx="2.500" cy="3" r="2" /><circle cx="11.500" cy="8" r="2" /><circle cx="21" cy="3" r="2" /><circle cx="3" cy="21" r="2" /></g><path d="M13 19l3 3 5-6" stroke="#f4e94a" strokeWidth="2" /></Ico></Btn>
      <HSep h="h-[8px]" />
      <Btn><Ico><path d="M2 1h20v22H2z" fill="#6b9bd2" stroke="#1d1d1d" /><path d="M2 1h5v22H2z" fill="#2a4054" /><text x="10" y="17.500" fontSize="16" fill="#fff" fontFamily="Liberation Serif">?</text></Ico></Btn>
    </div>
  );
}

function BottomToolbar() {
  const grid = ['#5f9db0', '#5a7585', '#4a3a44', '#a3c6cf', '#a3949f', '#8f4b50', '#d6d9d9', '#dba5a3', '#bb5757'];
  return (
    <div className="flex h-[38px] shrink-0 items-center">
      <Sep w="w-[5px]" />
      <Btn><Ico><path d="M12 1C6 1 6.500 4 6.500 6.500H13V8H4C1 8 1 12 1 13s1 5 4 5h2v-3c0-3 2-4 4-4h6c2 0 3-1 3-3V4c0-2-3-3-8-3z" fill="#3a78ab" /><path d="M12.500 22c6 0 5.500-3 5.500-5.500h-6.500V15H20c3 0 3-3 3-5s-1-4-3-4h-1v3c0 3-2 4-4 4H9c-2 0-3 1-3 3v3c0 2 3 3 6.500 3z" fill="#fdd245" /><circle cx="9" cy="4" r="1" fill="#fff" /><path d="M17 17l5 3-5 3" stroke="#888" strokeWidth="1.300" /></Ico></Btn>
      <Btn><Ico><path d="M6 19A8.300 8.300 0 1119 15" stroke="#4c8fdc" strokeWidth="4" /><path d="M10 14h13l-8 8z" fill="#4c8fdc" /></Ico></Btn>
      <Caret />
      <Btn><Ico><path d="M0 14l12-10 12 10-12 10z" fill="#e2efeb" /><path d="M1 11L12 1l11 10-11 10z" fill="#4aa693" stroke="#a8d8cf" /><path d="M7 16Q6 6 17 2q3 10-10 14z" fill="#8cd12e" /><path d="M15 18q6-5 4-12-7 5-7 11z" fill="#6bb524" /></Ico></Btn>
      <Btn><Ico><path d="M1 2l8 0 3 2 3-2h8l-6 8 4 5-9 7-9-7 4-5z" fill="#8fa9c6" /><path d="M1 2l11 7 11-7M3 15l9-6 9 6M12 9v13" stroke="#2e4258" strokeWidth="1.500" /><PlusBadge /></Ico></Btn>
      <Caret />
      <Btn><Ico><ellipse cx="12" cy="14" rx="6.500" ry="8.500" fill="#050505" /><circle cx="12" cy="4" r="3.500" fill="#050505" /><path d="M2 5l1 4 4 1M22 5l-1 4-4 1M1 14h22M3 23v-4l4-1M21 23v-4l-4-1" stroke="#050505" strokeWidth="1.800" /></Ico></Btn>
      <Btn><Ico><path d="M14 1q7-1 7 6t-5 10q-3 6-8 6-7 0-5-6 1-3 4-4 0-11 7-12z" fill="#eef04a" stroke="#141414" strokeWidth="1.400" /><path d="M15 4q4 0 3 5t-5 8q-3 3-6 3-2-2 3-6 0-9 5-10z" fill="#7ea7d4" stroke="#35557a" /><ellipse cx="15" cy="8" rx="2.300" ry="2.800" fill="#1c2ec4" stroke="#111" /></Ico></Btn>
      <Btn><Ico><path d="M3 22L14 7" stroke="#a37009" strokeWidth="5" /><path d="M3.500 21L14 7" stroke="#fcbf27" strokeWidth="3" /><path d="M9 2q7-2 10 3l4 2-2 3-5-2-3 1-1-4z" fill="#dfe3e6" stroke="#777" strokeWidth=".8" /></Ico></Btn>
      <Btn><Ico><path d="M3 8q0-5 6-4 5 1 11-1 2 4-5 5-6-1-12 0z" fill="#22b8cf" stroke="#0a0a0a" strokeWidth="2" /><path d="M2 15q0-5 6-4 5 1 12-1 2 4-5 6-6-2-13-1z" fill="#f0ef22" stroke="#0a0a0a" strokeWidth="2" /><path d="M5 20q2-3 6-2 5 0 9-2 3 4-4 5-6 1-11-1z" fill="#25c22f" stroke="#0a0a0a" strokeWidth="2" /><path d="M13 0v7M12 21v3" stroke="#d11" strokeWidth="1.500" /></Ico></Btn>
      <Btn><Ico><path d="M0 0h24v24H0z" fill="#c9dbe8" /><path d="M2 2h9.500v20H2z" fill="#a9d4ec" /><path d="M12.500 2H22v20h-9.500z" fill="#dce9f5" /><path d="M14 2h8v9q-5 1-8-9z" fill="#9abd2a" /><path d="M12 1v22" stroke="#667" /><path d="M11 9v6.500l-3-3.200zM13 9v6.500l3-3.200z" fill="#0a0a0a" stroke="#0a0a0a" /></Ico></Btn>
      <Btn><Ico><path d="M0 0h24v24H0z" fill="#0c0c0c" />{grid.map((c, i) => <rect key={i} x={(i % 3) * 8 + 0.3} y={Math.floor(i / 3) * 8 + 1} width="7.200" height="6.800" fill={c} />)}</Ico></Btn>
      <Btn><Ico><path d="M5 4h15v16" stroke="#0a0a0a" strokeDasharray="1.500 1.500" strokeWidth="1.500" /><path d="M3 8q5 1 7 5l-7 7z" fill="#fbf7a5" /><path d="M3 3v19M1 21h20" stroke="#0a0a0a" strokeWidth="2.400" /><path d="M4 20L18 6" stroke="#1414f0" strokeWidth="2" /><path d="M21 3l-1.500 6-4.500-4z" fill="#1414f0" /></Ico></Btn>
    </div>
  );
}

/* ---------- form controls ---------- */

const Spin = () => (
  <svg width="6" height="17" viewBox="0 0 6 17" className="shrink-0"><path d="M.5 5L3 .5 5.500 5zM.5 12L3 16.500 5.500 12z" fill="#b4b4b4" /></svg>
);

const Combo = ({ children, className = '' }: Kids & { className?: string }) => (
  <div className={`flex items-center border border-[#1e1e1e] bg-linear-to-b from-[#565656] to-[#484848] pr-[4px] ${className}`}>
    <div className="flex-1 flex items-center whitespace-nowrap">{children}</div>
    <Caret className="w-[6px]" />
  </div>
);

const SpinBox = ({ children, className = '' }: Kids & { className?: string }) => (
  <div className={`flex items-center justify-between border border-[#1e1e1e] bg-linear-to-b from-[#484848] to-[#525252] pl-1 pr-[4px] whitespace-nowrap ${className}`}>
    {children}
    <Spin />
  </div>
);

const PushBtn = ({ children, className = '' }: Kids & { className?: string }) => (
  <div className={`flex items-center justify-center border border-[#232323] whitespace-nowrap ${className}`}>{children}</div>
);

const CloseDock = () => (
  <svg width="9" height="10" viewBox="0 0 9 10" fill="none"><rect x=".5" y=".5" width="8" height="9" rx="1" stroke="#5a5a5a" /><path d="M2.500 3l4 4.500M6.500 3l-4 4.500" stroke="#6a6a6a" /></svg>
);

/* ---------- layers dock ---------- */

const swatches = [
  { c: 'bg-[#e8e8e8] border-[#f6f6f6]', v: '0.000 - 2.500', t: '0.0 - 2.5' },
  { c: 'bg-[#dfb0d6] border-[#f2e0ef]', v: '2.500 - 5.000', t: '2.5 - 5.0' },
  { c: 'bg-[#be64ac] border-[#e3bcdb]', v: '5.000 - 100.000', t: '5.0 - 100.0' },
];

function LayersDock() {
  return (
    <div className="w-[429px] shrink-0 flex flex-col pl-[1px] pr-[6px]">
      <div className="h-[20px] flex items-center relative justify-center pr-[26px] pb-[2px]">
        Layers
        <span className="absolute right-[4px] top-[3px] w-[9px]"><CloseDock /></span>
      </div>
      <div className="h-[29px] flex items-start pl-[3px]">
        <span className="w-[25px] h-[25px] border border-[#d9821e] flex items-center justify-center mt-px"><Ico s={15}><Brush /></Ico></span>
        <span className="w-[26px] h-[27px] flex items-center justify-center"><Ico s={16}><path d="M9 1h12v17H9z" fill="#eee" stroke="#999" /><path d="M5 5v16h12M1 9v14h10" stroke="#bbb" strokeWidth="1.500" /><path d="M15 4v10M12 7h3" stroke="#333" strokeWidth="2" /><PlusBadge /></Ico></span>
        <span className="w-[27px] h-[27px] flex items-center justify-center"><Ico s={17}><path d="M1 12Q10 1 22 11q-9 9-21 1z" fill="#e8e8e8" stroke="#777" /><circle cx="12" cy="11" r="5" fill="#4b80bb" /><circle cx="12" cy="11" r="2.200" fill="#111" /><path d="M14 17h10l-5 7z" fill="#999" /></Ico></span>
        <span className="w-[25px] h-[27px] flex items-center justify-center"><Ico s={16}><path d="M1 2h22v3l-9 8v10l-4-3v-7L1 5z" fill="#5f92cc" /><path d="M1 1.500h22v3H1z" fill="#f6e557" /></Ico></span>
        <span className="w-[27px] h-[27px] flex items-center justify-center"><Ico s={17}><path d="M10 2Q2 0 2 4.500q0 3 5 3-6 0-6 4Q2 16 10 13" stroke="#5c3468" strokeWidth="1.800" strokeDasharray="4 1" /><path d="M12 11h12v4l-3 3v6h-5v-6l-4-3z" fill="#c9c9c9" /></Ico></span>
        <span className="h-[27px] flex items-center"><Caret className="w-[9px]" /></span>
        <span className="w-[31px] h-[27px] flex items-center justify-center"><Ico s={16}><path d="M1 1v21h6M1 9h6" stroke="#bbb" strokeWidth="2" /><path d="M6 6h6v6H6zM6 17h6v6H6z" fill="#f3a21f" /><path d="M1 2h20" stroke="#bbb" strokeWidth="2" /><path d="M16 3h4v14h4l-6 7-6-7h4z" fill="#4f86c4" /></Ico></span>
        <span className="w-[22px] h-[27px] flex items-center justify-center"><Ico s={16}><path d="M1 1v21h6M1 9h6" stroke="#bbb" strokeWidth="2" /><path d="M6 6h6v6H6zM6 17h6v6H6z" fill="#f3a21f" /><path d="M1 2h13M10 22h6" stroke="#bbb" strokeWidth="2" /><path d="M16 23h4V8h4l-6-7-6 7h4z" fill="#4f86c4" /></Ico></span>
        <span className="w-[30px] h-[27px] flex items-center justify-center"><Ico s={16}><path d="M1 1h18v20H1z" fill="#eee" stroke="#aaa" /><rect x="13" y="15" width="11" height="9" rx="2" fill="#df3b3b" /><path d="M15 19.500h7" stroke="#fff" strokeWidth="2.200" /></Ico></span>
      </div>
      <div className="h-[757px] border border-[#5a5a5a] bg-[#222] p-px pr-[3px] text-[#e0e0e0]">
        <div className="h-[25px] bg-[#0f6f00] flex items-center font-bold border-b border-[#2c6a24]">
          <svg width="7" height="7" viewBox="0 0 7 7" className="ml-[7px]"><path d="M0 .5h7L3.500 7z" fill="#7a8a76" /></svg>
          <span className="ml-[9px] flex"><EyeIcon /></span>
          <svg width="17" height="13" viewBox="0 0 17 13" className="ml-[6px]"><path d="M1 2q2-2 5-.5t5-.5 4 0q2 2 1 5.500T15 10q-3 0-4.500-1.500t-4 .5Q4 13 1 12q1.500-4 0-10z" fill="#dcbb9d" /></svg>
          <span className="ml-[5px] underline underline-offset-[2px]">Election Returns - BATO</span>
        </div>
        {swatches.map((s) => (
          <div key={s.t} className="h-[25px] flex items-center ml-[40px] pl-[4px] border-b-2 border-[#303030]">
            <EyeIcon />
            <span className={`ml-[5px] size-[18px] border ${s.c}`} />
            <span className="ml-[6px]">{s.t}</span>
          </div>
        ))}
        <div className="h-[25px] flex items-center ml-[20px] pl-[3px] border-b border-[#303030] font-bold italic">
          <EyeIcon off />
          <span className="ml-[6px] size-[16px] border border-[#ff7b7b] bg-[#f00]" />
          <span className="ml-[6px] whitespace-pre">Election Returns  - CHEL</span>
        </div>
      </div>
      <div className="flex h-[27px] items-end">
        <div className="w-[73px] h-[27px] border border-t-0 border-[#565656] flex items-center justify-center">Layers</div>
        <div className="w-[83px] h-[22px] border border-t-0 border-l-0 border-[#565656] flex items-center justify-center">Browser</div>
      </div>
    </div>
  );
}

/* ---------- map canvas ---------- */

const light = '#dfb0d6';
const dark = '#be64ac';
const grey = '#e8e8e8';

const northLight = [
  'M303 375L320 370 340 373 362 385 385 395 400 415 425 423 450 422 470 410 474 390 482 386 497 408 495 425 478 442 475 470 472 490 475 525 485 545 510 558 512 585 524 588 518 620 505 640 492 668 480 685 475 712 455 715 430 735 405 745 388 762 385 778 396 787 388 805 378 815 372 835 360 840 362 850 378 872 380 895 392 910 405 932 393 938 400 965 412 985 412 1005 430 1022 450 1037 480 1045 497 1035 508 1000 520 992 550 992 570 997 580 1010 592 1022 604 1040 605 1055 590 1045 565 1035 540 1038 522 1048 520 1065 528 1090 545 1115 548 1140 538 1152 528 1145 520 1115 505 1100 490 1090 478 1075 455 1065 425 1050 408 1045 385 1055 370 1065 365 1082 345 1090 325 1087 312 1080 300 1065 296 1045 278 1050 262 1055 254 1040 253 1015 250 1005 265 992 285 980 302 968 305 955 300 935 285 928 265 918 228 905 212 910 190 925 175 915 170 880 165 860 152 832 158 800 150 775 143 752 131 755 133 720 131 700 147 692 158 712 175 737 185 745 205 742 222 728 225 710 260 600z',
  'M425 888L452 886 448 905 442 915 452 938 442 940 436 920 428 905z',
  'M468 915l12 6 8 6-14-4zM498 933h14l-4 3z',
  'M440 1005l16 14 22 14-10 0-18-14zM478 1012l8-4 6 16-8 4zM760 1030l14-5 6 18 15 10-2 30-20 17-25-15 10-20z',
  'M176 1055l20 10 8 12-12-4zM427 55l5 5-6 9-4-2zM452 102l-10 16 2-12zM429 122l3 6-3 2zM438 235l11 4-5 6zM361 263l20 0 2 12-12 0zM337 292l5 14-4 4zM347 333l26-2-10 4zM434 318l12 4-8 10-8 8z',
];
const northDark = [
  'M283 368L298 380 300 400 297 430 298 465 270 475 240 492 232 470 235 440 245 420 250 385 265 384 278 380z',
  'M303 400L318 385 345 400 375 418 374 440 365 458 352 485 365 495 370 508 350 510 322 508 322 480 305 470 298 465 302 430z',
  'M298 465L320 485 322 508 308 535 296 568 265 580 247 560 240 540 232 530 238 495 270 475z',
  'M228 475L240 480 240 492 232 520 232 535 246 545 250 565 275 580 275 610 250 620 244 645 235 617 226 615 224 580 230 545 214 525 220 505 228 490z',
  'M322 508L350 510 370 508 400 535 388 560 355 570 340 578 315 572 296 568 308 535z',
  'M275 582L296 568 315 572 340 578 360 565 387 562 386 592 345 600 303 605 292 628 275 615z',
  'M250 620L275 613 290 630 290 695 272 717 240 714 235 680 244 650z',
  'M212 630L225 617 238 620 243 650 232 680 238 713 225 714 214 700 208 660z',
  'M217 872L240 858 275 853 300 868 302 882 285 900 268 912 230 908 222 890z',
  'M203 920L228 908 240 925 238 940 248 955 246 972 225 970 218 950 200 937z',
];
const northLines = [
  'M303 375V400M375 418L400 408M402 530L475 525M388 560L387 592 392 620 365 635 355 645 345 653 293 660 290 630M365 655L387 657 415 690 465 672 492 670M355 640L365 655 362 680 370 690 350 708 352 740 375 760M462 675L420 720 350 780 332 760 330 735 290 728 270 717M350 780L358 820 355 862 325 855 300 865M290 728L295 755 285 772 250 772 245 785 222 785 200 802 185 772 150 775M200 802L187 820 190 845 215 868M250 772L270 805 272 853M355 862L355 907 310 930M360 860V915L372 950 355 960 345 990 340 965 320 960 312 930M372 950L397 980 397 1000 370 1020 342 1045 370 1060M342 1045L335 1018 312 1014 285 1025 250 1008M312 1014L306 940 300 925M495 1035L515 1015 565 1035 600 1050',
];

const midLight = [
  'M208 215L218 206 240 212 290 208 310 220 335 222 350 240 365 258 383 265 375 290 384 330 375 355 370 372 340 387 318 380 300 350 295 320 282 315 278 275 270 255 235 235 230 220 212 220z',
  'M425 208L447 203 468 210 465 235 455 248 440 235 428 232zM145 380L175 400 205 402 207 420 180 420 160 405zM146 430l10 10 12 8-6 20-10-14zM196 432h5v8h-5zM125 502h18l-12 5z',
  'M590 262l10 2 10 20 22 15-15-2-25-25zM668 280L700 285 730 268 745 285 760 270 757 300 755 325 745 345 720 320 720 295 690 297zM685 328l12 12 10 27-14-12z',
  'M455 335l12-2-4 30-7 22-6 20-4-30 8-20zM487 338l8 10-6 2zM515 352l20 2 14 12-6 14-12-6-14-8zM630 340l16 8 0 14 18-10 20 22 22 16 20 8 20 40 2 22-12-12-20-14-22-12-18-26-26 8-16 18-14 18 10-28 8-28z',
  'M780 345L800 348 830 352 870 346 890 345 905 342 920 355 925 375 952 387 945 405 948 425 940 450 948 490 965 510 970 520 960 530 955 548 918 550 912 460 900 385 880 390 850 385 795 382z',
  'M435 452L440 438 470 450 490 460 505 478 515 490 545 492 565 483 580 500 613 490 605 515 612 540 600 550 565 568 560 590 530 605 490 610 465 625 447 648 442 642 450 590 460 540 458 500 470 490 462 458 440 455z',
  'M547 607l6 15-8 25-8 4-12-14 10-16zM587 590L625 570 672 580 670 605 655 650 612 655 622 675 600 725 565 765 540 790 508 755 515 720 550 716 578 700 574 640 587 620z',
  'M130 635l12-12 16 6-12 8-8 8zM958 545h30l-16-8zM978 595l20 12-14 0zM405 288h5v4h-5zM440 275v6h-3zM455 290h6v14zM360 415l6 6M370 440l10 4',
];
const midGrey = ['M535 145L560 137 580 147 600 160 608 175 640 175 640 158 630 145 637 133 650 145 690 150 705 158 728 172 700 178 678 172 668 185 678 205 700 222 710 240 708 262 700 275 640 277 640 238 620 225 600 210 575 180 555 165z', 'M715 235l25 8 26 6-30 0z'];
const midDark = [
  'M792 382L830 382 860 395 903 383 902 420 917 432 922 460 915 480 922 510 916 550 905 528 880 525 880 505 868 490 885 470 868 450 850 425 810 405z',
  'M783 490L800 508 815 518 835 525 850 508 878 510 887 550 885 590 900 625 912 645 920 668 900 672 880 655 870 680 884 704 862 690 850 675 845 640 857 620 855 600 830 570 808 583 800 550 790 520z',
  'M790 470l20-4 15 20-14 12-18-14zM697 530l10 6-2 12zM740 530l6 2-4 20 2 30-2 50-4 20-30 20-20 25-8 30-18 30-20 32-4-15 12-55 8-28 22-22 20-30 26-30 8-25-6-15zM780 620l20-14 12 8-14 8-16 4z',
  'M616 653L640 655 638 685 615 725 612 750 638 810 625 845 595 848 580 815 570 802 545 797 590 740 620 680z',
  'M710 740L745 705 770 690 810 698 820 725 820 745 800 760 770 770 720 765 715 750zM703 770l14-6-4 8zM664 828l14-4 8-10 6 20-14 6zM832 826l10-5 10 16-10 4zM972 648l6 20-4 30 4 18-12 4-8-30 8-10zM968 728l10 2-6 8zM1035 706l6 20 6 16-20 4-2-18zM1016 755l6 0-4 15zM885 655l38 65-18-16zM850 465l12 8-4 6z',
];
const midLines = [
  'M292 208L278 240 340 270V387M640 240L665 225 680 222 675 205M478 524L487 545 515 535 545 537 570 540 580 520 605 512 605 495M478 524L500 515 510 498 530 492 505 480M478 524L470 470 458 455 435 452M487 545L497 570 470 605 455 625 447 648M616 655L622 675 590 735 540 793M795 383L835 382 862 400 880 388 905 386 905 375 922 378M905 386L900 425 918 430 920 460 912 485 922 510 918 548M850 683L866 668 868 640 890 632 905 628M878 510L885 525 920 530',
];

const mindanao = [
  'M583 24L597 28 607 48 640 62 652 75 670 102 692 95 690 120 712 155 705 167 680 188 690 205 720 207 718 225 705 235 728 250 725 285 718 292 745 320 750 355 740 395 725 420 695 432 700 465 692 517 682 490 680 450 665 415 650 400 642 372 620 390 610 410 585 430 575 480 600 490 620 530 622 560 600 605 575 628 565 610 550 598 565 575 562 560 545 555 533 587 500 580 440 550 410 535 388 500 385 460 375 440 380 410 410 398 415 378 405 362 385 340 358 320 330 300 350 272 375 258 418 252 422 210 440 193 460 205 487 212 490 140 505 138 520 155 540 160 552 130 560 140 590 138 598 120 595 75 583 45z',
  'M330 300L318 300 297 315 300 332 280 345 294 367 265 345 250 335 243 305 243 322 227 350 210 340 207 315 180 308 160 325 145 350 130 385 122 420 105 437 80 420 80 402 95 385 105 360 110 310 130 285 180 265 230 258 236 212 290 200 298 180 313 190 318 192 345 200 358 262 328 275z',
  'M65 478L85 475 97 462 115 475 133 478 120 490 115 503 90 505 75 487zM622 400l10 2 2 30-12-20zM207 368l12 0-10 12zM573 652h8l-4 6z',
];
const mindanaoLines = [
  'M590 70L625 72 635 85 650 68M633 85L632 110 618 150 620 178 592 183 560 185M633 105L652 130 655 155 672 190 680 215 700 228 712 240 700 262 716 275M556 140L560 225 578 255 580 282 655 282 670 288 718 282M558 195H503L498 218 467 222 462 250 455 262 485 315 495 335M418 232H445L462 242M455 262L425 250 415 278 398 282 398 293 382 297 382 320 355 320M405 362L445 328 470 330 495 335 500 355 525 367 545 357 558 340 585 332 580 282M558 343H595V388H610M558 343L562 380 555 395 567 418 542 460 490 458 493 420 485 402 478 410 480 432 445 415 430 380 445 355 440 332M385 460L455 463 465 443 490 458 492 472 545 465 550 490 500 490 485 472 470 485 470 520 420 523 435 540 490 567 530 567M545 500L537 515 558 525 563 555M550 490L552 508 575 508 580 490M563 520H585L600 545 595 590 570 628M620 282L625 305 640 328 657 305M688 283L705 335 710 382 660 410M313 190L315 270 328 278 330 300M313 247H265L258 280 225 293 250 320M225 293L195 287 160 305 130 335 120 358 112 395 100 402H80M122 356H142',
];

const palawan = [
  'M418 155L428 165 425 190 420 210 430 235 432 255 447 278 430 297 400 300 380 320 378 343 345 350 310 358 312 380 300 410 275 440 250 468 222 472 212 495 180 530 150 543 135 560 110 568 90 590 95 570 115 540 130 515 155 490 190 460 210 465 240 430 280 390 305 345 325 345 325 325 355 310 355 298 372 295 398 265 400 250 385 225 410 240 412 225 400 210 410 200z',
  'M475 22L500 38 535 42 538 60 510 60 485 45zM478 70l10 10 8 14-6 16-8-14zM455 142h16l-6 5zM459 275l12-10 18 2-14 14-14 6zM100 596h10v14h-8zM58 632l12-2 2 20-10 16-8-14zM384 230l14 10zM640 230l5-4-2 8zM690 50l6 10-4 3zM704 84h8v3h-8z',
];
const suluDark = [
  'M267 780h13l-4 6zM572 874l4-2-2 18-6 2zM620 935l12-14 20-4 12 10 14 5 18 2-14 10-10-6-24 4-8-4-18 4zM455 1062l12-6zM466 1058l20-14 18-8 14-14 8 14-4 12-16-4-22 10-14 8zM603 996l10-6 8 6-8 4zM612 972h6v3h-6zM656 953l6 2-4 3zM416 1088q6 14 0 32 2-16 0-32zM464 1086h5v6h-5z',
];
const faint = [[605, 150], [628, 185], [516, 148], [552, 15], [220, 885], [228, 892], [256, 905], [278, 855], [700, 820], [716, 805], [722, 828], [555, 905], [592, 868], [614, 880], [505, 935], [490, 944], [452, 958], [575, 1008], [590, 1005], [565, 1045], [735, 925], [748, 910], [770, 925], [540, 1050]];

function MapCanvas() {
  const draw = (a: string[], c: string) => a.map((d, i) => <path key={c + i} d={d} fill={c} stroke={c} strokeWidth=".6" />);
  const lines = (a: string[]) => a.map((d, i) => <path key={'l' + i} d={d} fill="none" stroke="#fdf3fb" strokeWidth="3.600" strokeLinejoin="round" />);
  return (
    <div className="w-[824px] shrink-0 border border-[#1f1f1f] bg-white">
      <svg width="822" height="831" viewBox="468.500 146 822 831" className="block">
        <defs>
          <filter id="coast" x="-5%" y="-5%" width="110%" height="110%">
            <feTurbulence type="fractalNoise" baseFrequency="0.22" numOctaves="2" seed="4" result="n" />
            <feDisplacementMap in="SourceGraphic" in2="n" scale="3" xChannelSelector="R" yChannelSelector="G" />
          </filter>
        </defs>
        <g filter="url(#coast)">
          <g transform="translate(740 160) scale(.33333)">{draw(northLight, light)}{draw(northDark, dark)}
            {northDark.map((d, i) => <path key={i} d={d} fill="none" stroke="#fdf3fb" strokeWidth="2.800" />)}</g>
          <g transform="translate(740 460) scale(.33333)">{draw(midLight, light)}{draw(midGrey, grey)}{draw(midDark, dark)}</g>
          <g transform="translate(860 700) scale(.33333)">{draw(mindanao, dark)}</g>
          <g transform="translate(630 580) scale(.33333)">
            {draw(palawan, light)}{draw(suluDark, dark)}
            {faint.map(([x, y], i) => <rect key={i} x={x} y={y} width="5" height="3" fill="#f2dfef" />)}
          </g>
        </g>
        <g transform="translate(740 160) scale(.33333)">{lines(northLines)}</g>
        <g transform="translate(740 460) scale(.33333)">{lines(midLines)}</g>
        <g transform="translate(860 700) scale(.33333)">{lines(mindanaoLines)}</g>
      </svg>
    </div>
  );
}

/* ---------- styling dock ---------- */

const Label = ({ children }: Kids) => <span className="w-[102px] shrink-0 whitespace-nowrap">{children}</span>;
const Check = ({ on = false }: { on?: boolean }) => <span className={`size-[14px] shrink-0 ${on ? 'bg-[#0f6f00]' : 'bg-[#525252]'}`} />;
const Tri = () => <svg width="8" height="12" viewBox="0 0 8 12" fill="none" className="shrink-0"><path d="M1.500 1.500L6.500 6l-5 4.500z" stroke="#161616" strokeWidth="1.200" /></svg>;

function StylingDock() {
  return (
    <div className="flex-1 flex flex-col pl-[6px] pr-[3px]">
      <div className="h-[20px] flex items-center justify-center relative pr-[22px] pb-[2px]">
        Layer Styling
        <span className="absolute right-0 top-[3px]"><CloseDock /></span>
      </div>
      <Combo className="h-[25px] mt-px ml-[3px]">
        <svg width="17" height="13" viewBox="0 0 17 13" className="ml-[3px]"><path d="M1 2q2-2 5-.5t5-.5 4 0q2 2 1 5.500T15 10q-3 0-4.500-1.500t-4 .5Q4 12 1 11z" fill="#e8e8e8" /></svg>
        <span className="ml-[5px]">Election Returns - BATO</span>
      </Combo>
      <div className="flex ml-[3px] mt-[6px] h-[751px]">
        <div className="w-[38px] border border-[#565656] bg-[#222] p-px flex flex-col items-center">
          <span className="w-[34px] h-[30px] bg-[#0f6f00] flex items-center justify-center"><Ico s={20}><Brush /></Ico></span>
          <span className="h-[30px] flex items-center pt-1"><Ico s={22}><Tag y={2} /></Ico></span>
          <span className="h-[30px] flex items-center"><Ico s={23}><path d="M12 1l8 7-8 7-8-7z" fill="#f78b8b" stroke="#c41a1a" /><path d="M2 8.500l10 7V23L2 17z" fill="#8ce030" stroke="#4c9a10" /><path d="M22 8.500l-10 7V23l10-6z" fill="#fbe64b" stroke="#b79a05" /></Ico></span>
          <span className="h-[30px] flex items-center"><Ico s={22}><path d="M8 4H6v13M16 4h2v13M9.500 8v10M14.500 8v10" stroke="#c88a36" strokeWidth="2.200" /><path d="M8 0h8v8H8z" fill="#e86a6a" stroke="#a81f1f" /><path d="M1 17h9v7H1z" fill="#fbdc5a" stroke="#b8940b" /><path d="M14 17h9v7h-9z" fill="#88b9ec" stroke="#4179b5" /></Ico></span>
          <span className="h-[30px] flex items-center"><Ico s={22}><g transform="translate(0 14) rotate(-70) scale(.62)"><Undo c="#6fae7b" flip /></g><g transform="translate(9 9) scale(.62)"><Undo /></g></Ico></span>
        </div>
        <div className="flex-1 flex flex-col ml-[3px]">
          <Combo className="h-[25px]">
            <svg width="14" height="15" viewBox="0 0 14 15" className="ml-[4px]"><rect x=".5" y=".5" width="10" height="3.600" fill="#fdd20b" stroke="#f59a00" /><rect x="3" y="5.700" width="10" height="3.600" fill="#ff6a13" stroke="#d83c00" /><rect x=".5" y="11" width="10" height="3.500" fill="#c8130b" stroke="#700" /></svg>
            <span className="ml-[7px]">Graduated</span>
          </Combo>
          <div className="flex items-center h-[25px] mt-[6px]">
            <Label>Column</Label>
            <Combo className="h-[25px] w-[443px]"><span className="w-[22px] ml-[3px] text-[#5c5c5c] text-[10px] font-bold">1.2</span>DELA ROSA, BATO (PDPLBN) - PERCENTAGE</Combo>
            <span className="ml-[6px] w-[25px] h-[25px] border border-[#1e1e1e] bg-[#4c4c4c] flex items-center justify-center"><Ico s={13}><path d="M19 4Q6 0 6 7q0 4 8 4-10 0-10 6 2 7 15 3" stroke="#6f3c80" strokeWidth="3" /></Ico></span>
          </div>
          <div className="flex items-center h-[27px] mt-[6px]">
            <Label>Symbol</Label>
            <PushBtn className="flex-1 h-[27px] pr-[2px]"><span className="size-[16px] bg-[#a5705a] border border-[#8a5b48] mr-[4px]" />Change...</PushBtn>
          </div>
          <div className="flex items-center h-[25px] mt-[6px]">
            <Label>Legend format</Label>
            <span className="w-[305px] h-[25px] border border-[#141414] bg-[#8a8a8a] text-[#1c1c1c] flex items-center pl-[4px]">%1 - %2</span>
            <SpinBox className="w-[104px] h-[25px] ml-[6px]">Precision 1</SpinBox>
            <span className="ml-[6px] flex"><Check /></span>
            <span className="ml-[7px]">Trim</span>
          </div>
          <div className="flex items-center h-[25px] mt-[6px]">
            <Label>Method</Label>
            <Combo className="h-[25px] flex-1"><span className="ml-[3px]">Color</span></Combo>
          </div>
          <div className="flex items-center h-[28px] mt-[6px]">
            <Label>Color ramp</Label>
            <Combo className="h-[28px] flex-1"><span className="ml-[2px] mr-[4px] h-[15px] flex-1 bg-linear-to-r from-white to-[#f00]" /></Combo>
          </div>
          <div className="flex items-end h-[27px] mt-[6px]">
            <span className="w-[79px] h-[27px] border border-b-0 border-[#565656] flex items-center justify-center">Classes</span>
            <span className="w-[97px] h-[22px] border border-b-0 border-l-0 border-[#565656] flex items-center justify-center">Histogram</span>
          </div>
          <div className="mt-[9px] ml-px mr-px h-[335px] border border-[#5a5a5a] bg-[#222] p-px">
            <div className="h-[20px] bg-[#303030] border-b border-[#565656] flex items-stretch">
              <span className="w-[62px] border-r border-[#565656] pl-[4px] pb-[2px] flex items-center overflow-hidden whitespace-nowrap">Symbol<span className="-ml-1"><Caret className="w-[6px]" /></span></span>
              <span className="w-[110px] border-r border-[#565656] pl-[4px] pb-[2px] flex items-center">Values</span>
              <span className="pl-[4px] pb-[2px] flex items-center">Legend</span>
            </div>
            {swatches.map((s) => (
              <div key={s.v} className="h-[24px] flex items-center border-b-2 border-[#2e2e2e] pl-[3px] text-[#e0e0e0] whitespace-nowrap">
                <EyeIcon />
                <span className={`ml-[6px] size-[16px] border ${s.c}`} />
                <span className="ml-[26px] w-[110px]">{s.v}</span>
                <span>{s.t}</span>
              </div>
            ))}
          </div>
          <div className="flex items-center h-[25px] mt-[6px] ml-px mr-px">
            <span className="w-[42px]">Mode</span>
            <Combo className="w-[187px] h-[25px]"><span className="ml-[3px]">Equal Interval</span></Combo>
            <span className="ml-auto mr-[6px]">Classes</span>
            <SpinBox className="w-[50px] h-[25px]">3</SpinBox>
          </div>
          <div className="flex items-center h-[20px] mt-[5px] ml-[5px] font-bold text-[#e6e6e6]">
            <Tri /><span className="ml-[8px] flex"><Check /></span><span className="ml-[9px]">Symmetric Classification</span>
          </div>
          <div className="flex items-start h-[27px] mt-[10px] ml-px mr-px">
            <PushBtn className="w-[61px] h-[27px]">Classify</PushBtn>
            <PushBtn className="w-[30px] h-[26px] ml-[6px]"><Ico s={14}><path d="M8 1h8v7h7v8h-7v7H8v-7H1V8h7z" fill="#3d9150" stroke="#3d9150" strokeWidth="2" /><path d="M9 2.500h6V9h6.500v6H15v6.500H9V15H2.500V9H9z" stroke="#fff" strokeWidth="2.400" /></Ico></PushBtn>
            <PushBtn className="w-[30px] h-[26px] ml-[6px]"><Ico s={14}><path d="M0 7h24v10H0z" fill="#e03333" /><path d="M2.500 9.500h19v5h-19z" stroke="#fff" strokeWidth="2" /></Ico></PushBtn>
            <PushBtn className="w-[73px] h-[27px] ml-[6px]">Delete All</PushBtn>
            <PushBtn className="w-[87px] h-[27px] ml-auto pr-[1px]">Advanced<svg width="10" height="6" viewBox="0 0 10 6" className="ml-[5px] mt-[12px]"><path d="M0 0h10L5 5.500z" fill="#9a9a9a" /></svg></PushBtn>
          </div>
          <div className="flex items-center h-[20px] mt-[5px] ml-[2px]"><Check on /><span className="ml-[7px]">Link class boundaries</span></div>
          <div className="flex items-center h-[20px] mt-[14px] ml-[5px] font-bold text-[#e6e6e6]"><Tri /><span className="ml-[9px]">Layer Rendering</span></div>
          <div className="flex items-center mt-auto h-[27px]">
            <span className="w-[25px] h-[25px] border border-[#1e1e1e] bg-[#4e4e4e] flex items-center justify-center"><Ico s={15}><Undo /></Ico></span>
            <span className="ml-[6px] w-[25px] h-[25px] border border-[#1e1e1e] bg-[#4e4e4e] flex items-center justify-center"><Ico s={15}><Undo c="#6fae7b" flip /></Ico></span>
            <span className="ml-auto mr-[7px] flex"><Check on /></span>Live update
            <PushBtn className="w-[67px] h-[27px] ml-[8px]"><svg width="13" height="12" viewBox="0 0 13 12" fill="none" className="mr-[6px]"><path d="M1 7l3 3.500L12 .8" stroke="#b4b4b4" strokeWidth="2" /></svg>Apply</PushBtn>
          </div>
        </div>
      </div>
      <div className="flex items-end h-[27px] mt-[4px] whitespace-nowrap">
        <span className="w-[115px] h-[27px] border border-t-0 border-[#565656] flex items-center justify-center">Layer Styling</span>
        <span className="w-[89px] h-[22px] border border-t-0 border-l-0 border-[#565656] flex items-center justify-center">Statistics</span>
        <span className="w-[155px] h-[22px] border border-t-0 border-l-0 border-[#565656] flex items-center justify-center">Processing Toolbox</span>
        <span className="w-[108px] h-[22px] border border-t-0 border-l-0 border-[#565656] flex items-center justify-center">Search QMS</span>
      </div>
    </div>
  );
}

/* ---------- status bar ---------- */

function StatusBar() {
  return (
    <div className="flex items-center h-[32px] pt-px pl-[4px] text-[11px] whitespace-nowrap">
      <div className="w-[270px] h-[25px] border border-[#141414] bg-[#8a8a8a] text-[#4f4f4f] text-[13px] flex items-center pl-[7px] shrink-0">
        <svg width="14" height="14" viewBox="0 0 14 14" fill="none"><circle cx="6" cy="5.500" r="4" stroke="#9b9b9b" strokeWidth="1.500" /><path d="M9 8.500l4 5" stroke="#9b9b9b" strokeWidth="1.500" /></svg>
        <span className="ml-[9px]">Type to locate (Ctrl+K)</span>
      </div>
      <span className="ml-[10px] w-[747px] py-1 overflow-hidden text-[#525252] shrink-0">Saved project to: geopackage:/home/bnhr/dev/BNHR/posts/bivariate-choropleth-in-qgis/bivariate-choropleth-in-qgis.gpkg?projectName=</span>
      <span className="ml-[10px] w-[64px]">Coordinate</span>
      <span className="w-[89px] h-[22px] border border-[#141414] bg-[#8a8a8a] text-[#151515] flex items-center justify-center">124.77,12.23</span>
      <span className="ml-[4px] w-[17px]"><Ico s={17}><path d="M3 1l4 9M8 0l2 9M1 12l4-2M16 4l4-3M19 14l4 2" stroke="#ddd" strokeWidth="2.500" /><path d="M7 9l7 1 8 6-3 7-9 1-5-7z" fill="#e6e6e6" stroke="#111" strokeWidth="1.500" /><circle cx="13" cy="16" r="3.500" fill="#222" /><circle cx="12" cy="15" r="1.300" fill="#fff" /></Ico></span>
      <span className="ml-[13px] w-[34px]">Scale</span>
      <Combo className="w-[107px] h-[25px]"><span className="ml-[5px]">1:7467754</span></Combo>
      <svg width="12" height="16" viewBox="0 0 12 16" fill="none" className="ml-[12px] shrink-0"><path d="M2.500 8V5q0-4 3.500-4t3.500 4v3" stroke="#c4c4c4" strokeWidth="1.800" /><rect y="7.500" width="12" height="8" rx="1" fill="#6a6a6a" /></svg>
      <span className="ml-[11px] w-[55px]">Magnifier</span>
      <SpinBox className="w-[98px] h-[25px]">100%</SpinBox>
      <span className="ml-[9px] w-[56px]">Rotation</span>
      <SpinBox className="w-[94px] h-[25px]">0.0 °</SpinBox>
      <span className="ml-[7px] flex"><Check on /></span>
      <span className="ml-[7px]">Render</span>
      <svg width="15" height="15" viewBox="0 0 15 15" fill="none" className="ml-[14px] shrink-0"><circle cx="7.500" cy="7.500" r="7" fill="#b9b9b9" /><path d="M.5 7.500h14M7.500.5v14M2 3.500q5.500 2 11 0M2 11.500q5.500-2 11 0" stroke="#666" strokeWidth=".7" /><ellipse cx="7.500" cy="7.500" rx="3.500" ry="7" stroke="#666" strokeWidth=".7" /></svg>
      <span className="ml-[5px]">EPSG:4326</span>
      <svg width="16" height="16" viewBox="0 0 16 16" className="ml-[18px] shrink-0"><circle cx="8" cy="7.500" r="7.500" fill="#5d5d5d" /><path d="M10 12l5 4-1-7z" fill="#5d5d5d" /><circle cx="4.500" cy="7" r="1.200" fill="#eee" /><circle cx="8" cy="7" r="1.200" fill="#eee" /><circle cx="11.500" cy="7" r="1.200" fill="#eee" /></svg>
    </div>
  );
}

const menus: [string, number][] = [['Project', 3], ['Edit', 0], ['View', 0], ['Layer', 0], ['Settings', 0], ['Plugins', 0], ['Vector', 4], ['Raster', 0], ['Database', 0], ['Web', 0], ['Mesh', 0], ['MMQGIS', -1], ['Processing', 3], ['Help', 0]];

export default function App() {
  return (
    <div className="w-[1920px] h-[1048px] overflow-hidden flex flex-col bg-[#323232] text-[#acacac] text-[13px] leading-none font-['DejaVu_Sans',sans-serif]">
      <header className="h-[36px] shrink-0 bg-[#5a504a] relative flex items-center justify-center text-[#f2f0ee]">
        <span className="font-['Noto_Sans',sans-serif] font-bold text-[12.500px] tracking-[-0.17px] whitespace-nowrap">Bivariate Choropleth in QGIS - QGIS</span>
        <div className="absolute right-[12px] top-[6px] flex items-center h-6">
          <span className="w-[8px] h-[2px] bg-[#f2f0ee] mt-[5px]" />
          <span className="ml-[22px] size-[8px] border-2 border-[#f2f0ee]" />
          <span className="ml-[14px] size-[24px] rounded-full bg-[#f58220] flex items-center justify-center">
            <svg width="9" height="9" viewBox="0 0 9 9"><path d="M1 1l7 7M8 1L1 8" stroke="#fff" strokeWidth="2" /></svg>
          </span>
        </div>
      </header>
      <nav className="h-[21px] shrink-0 flex items-center pl-[10px] gap-[15px] pt-[1px]">
        {menus.map(([m, u]) => (
          <span key={m}>{u < 0 ? m : <>{m.slice(0, u)}<span className="underline underline-offset-[3px]">{m[u]}</span>{m.slice(u + 1)}</>}</span>
        ))}
      </nav>
      <MainToolbar />
      <PluginToolbar />
      <div className="h-[843px] shrink-0 flex pt-[10px]">
        <SideToolbar />
        <LayersDock />
        <MapCanvas />
        <StylingDock />
      </div>
      <BottomToolbar />
      <StatusBar />
    </div>
  );
}
